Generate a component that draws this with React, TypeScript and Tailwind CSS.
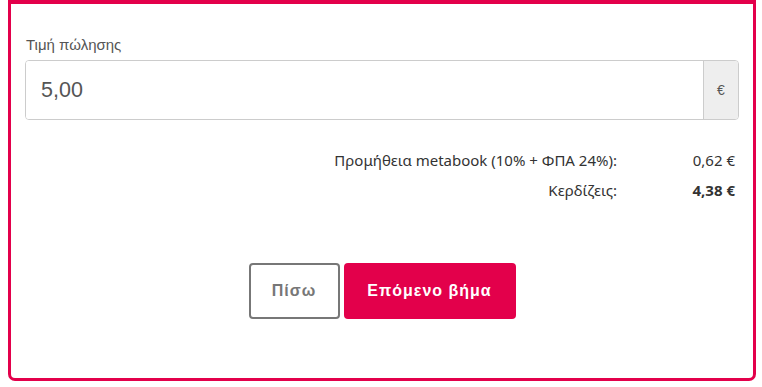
export default function App() {
  return (
    <div className="bg-white w-[762px] h-[387px] pl-2 pr-[6px] pb-[6px]">
      <div className="h-full border-[3px] border-t-4 border-[#e3004b] rounded-b-[7px] bg-white px-[14px] pt-[31px]">
        <label className="block text-[15px] leading-[20px] text-[#555] font-['Liberation_Sans',Arial,sans-serif] ml-px">
          Τιμή πώλησης
        </label>
        <div className="mt-[5px] flex h-[60px] border border-[#ccc] rounded-[4px] overflow-hidden">
          <input
            defaultValue="5,00"
            className="flex-1 min-w-0 pl-[15px] pr-3 text-[21.5px] text-[#555] font-['Liberation_Sans',Arial,sans-serif] outline-none bg-white"
          />
          <span className="w-[35px] flex items-center justify-center bg-[#eee] border-l border-[#ccc] text-[14px] text-[#555] font-['Liberation_Sans',Arial,sans-serif]">
            €
          </span>
        </div>

        <div className="mt-[30px] grid grid-cols-[1fr_118px] gap-y-[10px] text-[15px] leading-[20px] text-[#333] font-['Noto_Sans',sans-serif] pr-1">
          <span className="text-right">Προμήθεια metabook (10% + ΦΠΑ 24%):</span>
          <span className="text-right">0,62 €</span>
          <span className="text-right">Κερδίζεις:</span>
          <span className="text-right font-bold">4,38 €</span>
        </div>

        <div className="mt-[63px] flex justify-center gap-1 font-['Liberation_Sans',Arial,sans-serif] font-bold text-[16px] tracking-[1px]">
          <button className="w-[91px] h-[56px] border-2 border-[#777] rounded-[4px] text-[#777] bg-white">
            Πίσω
          </button>
          <button className="w-[172px] h-[56px] rounded-[4px] bg-[#e3004b] text-white">
            Επόμενο βήμα
          </button>
        </div>
      </div>
    </div>
  );
}
